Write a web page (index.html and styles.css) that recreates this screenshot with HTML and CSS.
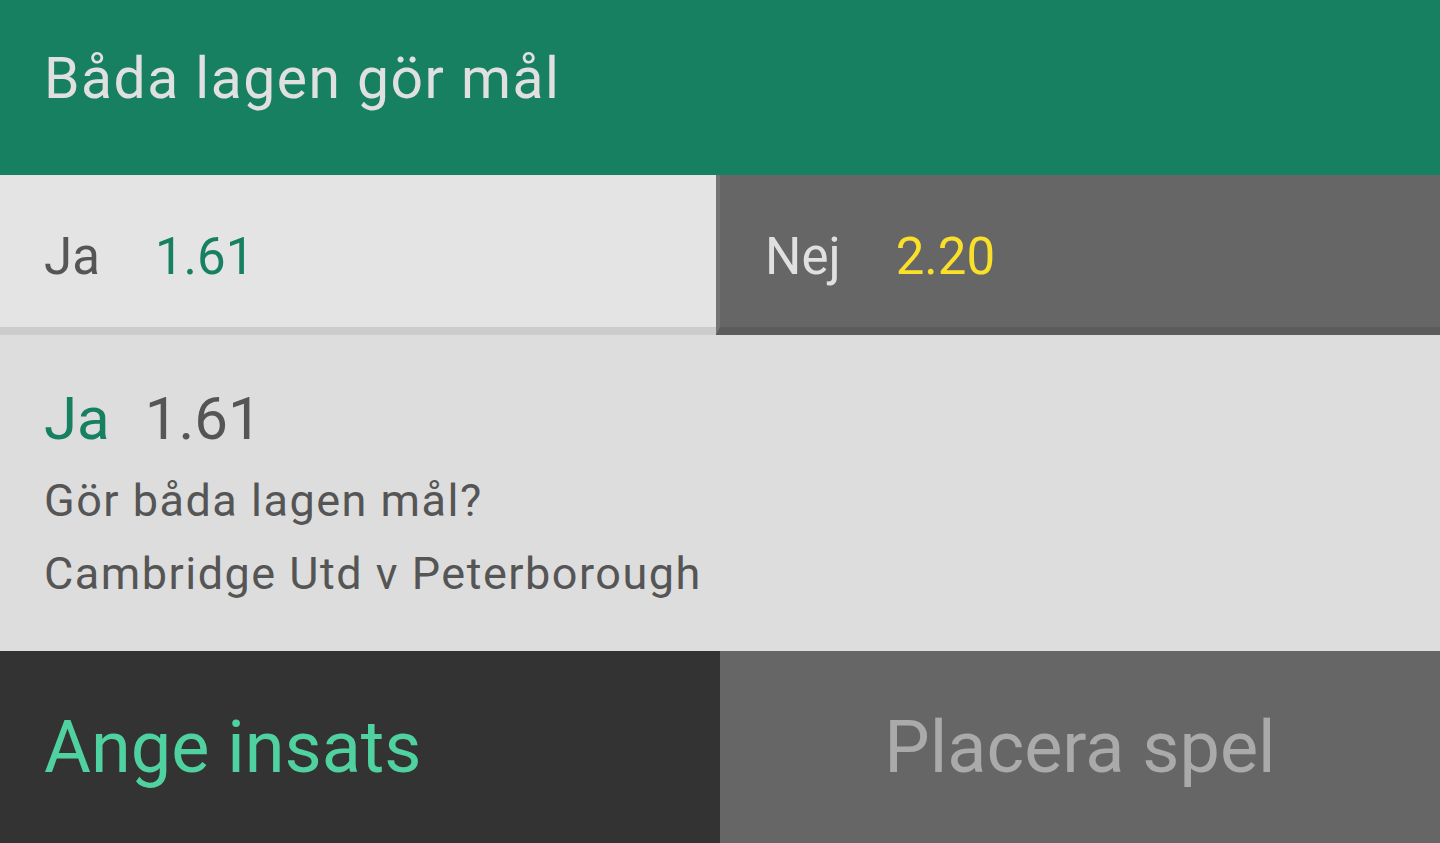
FILE: index.html
```html
<!DOCTYPE html>
<html lang="sv">
<head>
<meta charset="utf-8">
<link rel="stylesheet" href="styles.css">
</head>
<body>
<div class="app">
  <header class="market-header">Båda lagen gör mål</header>
  <div class="odds-row">
    <div class="odds-cell odds-cell--selected">
      <span class="odds-label">Ja</span><span class="odds-price">1.61</span>
    </div>
    <div class="odds-cell odds-cell--other">
      <span class="odds-label">Nej</span><span class="odds-price">2.20</span>
    </div>
  </div>
  <section class="slip">
    <div class="slip-title"><span class="slip-sel">Ja</span><span class="slip-price">1.61</span></div>
    <div class="slip-lines">
      <div class="slip-line">Gör båda lagen mål?</div>
      <div class="slip-line">Cambridge Utd v Peterborough</div>
    </div>
  </section>
  <div class="actions">
    <div class="action action--stake">Ange insats</div>
    <div class="action action--place">Placera spel</div>
  </div>
</div>
</body>
</html>
```
FILE: styles.css
```css
* { box-sizing: border-box; }
html, body { margin: 0; padding: 0; }
body {
  font-family: Roboto, "Noto Sans", Arial, sans-serif;
  width: 1440px;
  height: 843px;
  overflow: hidden;
  background: #dddddd;
}
.app { display: flex; flex-direction: column; height: 843px; }

.market-header {
  height: 175px;
  background: #168060;
  color: #e0e0e0;
  font-size: 57px;
  letter-spacing: 1.5px;
  display: flex;
  align-items: center;
  padding-left: 44px;
  padding-bottom: 18px;
}

.odds-row { display: flex; height: 160px; }
.odds-cell {
  display: flex;
  align-items: center;
  font-size: 51px;
  padding-top: 11px;
}
.odds-cell--selected {
  width: 716px;
  background: #e4e4e4;
  border-bottom: 8px solid #cccccc;
  padding-left: 44px;
}
.odds-cell--selected .odds-label { color: #555555; }
.odds-cell--selected .odds-price { color: #168060; }
.odds-cell--other {
  flex: 1;
  background: #666666;
  border-left: 4px solid #747474;
  border-bottom: 8px solid #5c5c5c;
  padding-left: 45px;
}
.odds-cell--other .odds-label { color: #e0e0e0; }
.odds-cell--other .odds-price { color: #fbe02a; }
.odds-label { margin-right: 55px; }

.slip {
  height: 316px;
  background: #dddddd;
  padding: 44px 44px 0;
  color: #555555;
}
.slip-title { font-size: 60px; line-height: 80px; }
.slip-sel { color: #168060; margin-right: 35px; }
.slip-price { color: #555555; }
.slip-lines { padding-top: 5px; }
.slip-line { font-size: 45px; line-height: 73px; letter-spacing: 1.5px; }

.actions { display: flex; flex: 1; }
.action {
  width: 720px;
  display: flex;
  align-items: center;
  font-size: 72px;
}
.action--stake {
  background: #333333;
  color: #4fd1a0;
  padding-left: 44px;
}
.action--place {
  background: #666666;
  color: #aaaaaa;
  justify-content: center;
}
```
